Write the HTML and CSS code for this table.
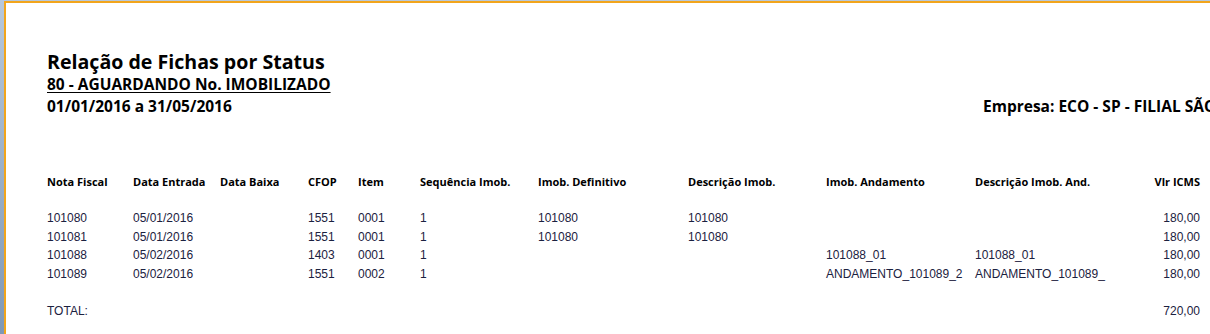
FILE: index.html
```html
<!DOCTYPE html>
<html lang="pt-BR">
<head>
<meta charset="utf-8">
<title>Relação de Fichas por Status</title>
<link rel="stylesheet" href="styles.css">
</head>
<body>
<div class="frame">
  <div class="page">
    <header class="report-head">
      <h1 class="title">Relação de Fichas por Status</h1>
      <div class="status">80 - AGUARDANDO No. IMOBILIZADO</div>
      <div class="period-line">
        <div class="period">01/01/2016 a 31/05/2016</div>
        <div class="company">Empresa: ECO - SP - FILIAL SÃO PAULO</div>
      </div>
    </header>
    <div class="grid head-row">
      <div>Nota Fiscal</div><div>Data Entrada</div><div>Data Baixa</div><div>CFOP</div><div>Item</div><div>Sequência Imob.</div><div>Imob. Definitivo</div><div>Descrição Imob.</div><div>Imob. Andamento</div><div>Descrição Imob. And.</div><div class="num">Vlr ICMS</div>
    </div>
    <div class="rows">
      <div class="grid data-row">
        <div>101080</div><div>05/01/2016</div><div></div><div>1551</div><div>0001</div><div>1</div><div>101080</div><div>101080</div><div></div><div></div><div class="num">180,00</div>
      </div>
      <div class="grid data-row">
        <div>101081</div><div>05/01/2016</div><div></div><div>1551</div><div>0001</div><div>1</div><div>101080</div><div>101080</div><div></div><div></div><div class="num">180,00</div>
      </div>
      <div class="grid data-row">
        <div>101088</div><div>05/02/2016</div><div></div><div>1403</div><div>0001</div><div>1</div><div></div><div></div><div>101088_01</div><div>101088_01</div><div class="num">180,00</div>
      </div>
      <div class="grid data-row">
        <div>101089</div><div>05/02/2016</div><div></div><div>1551</div><div>0002</div><div>1</div><div></div><div></div><div>ANDAMENTO_101089_2</div><div>ANDAMENTO_101089_</div><div class="num">180,00</div>
      </div>
    </div>
    <div class="grid total-row">
      <div class="total-label">TOTAL:</div><div class="num">720,00</div>
    </div>
  </div>
</div>
</body>
</html>
```

FILE: styles.css
```css
html, body {
  margin: 0;
  padding: 0;
  height: 100%;
  overflow: hidden;
}
body {
  background: linear-gradient(to bottom, #b7c8dc, #7f98b6);
}
.frame {
  height: 100%;
  padding: 1px 0 0 4px;
  box-sizing: border-box;
}
.page {
  height: 100%;
  background: #ffffff;
  border-top: 2px solid #f2a51c;
  border-left: 2px solid #f2a51c;
  box-sizing: border-box;
  padding: 47px 0 0 41px;
  color: #000;
}
.report-head {
  font-family: "Open Sans", "Noto Sans", sans-serif;
  font-weight: 700;
}
.title {
  margin: 0;
  font-size: 19.6px;
  line-height: 24px;
  font-weight: 700;
}
.status {
  font-size: 15.5px;
  line-height: 21px;
  text-decoration: underline;
  text-underline-offset: 2px;
}
.period-line {
  display: flex;
  font-size: 15.5px;
  line-height: 22px;
  white-space: nowrap;
}
.period {
  flex: 0 0 936px;
}
.company {
  flex: 0 0 auto;
}
.grid {
  display: grid;
  grid-template-columns: 86px 87px 88px 50px 62px 118px 150px 138px 149px 135px 90px;
  white-space: nowrap;
}
.head-row {
  margin-top: 57px;
  font-family: "Open Sans", "Noto Sans", sans-serif;
  font-weight: 700;
  font-size: 11px;
  line-height: 16px;
}
.rows {
  margin-top: 19px;
}
.data-row, .total-row {
  font-family: "Liberation Sans", Arial, sans-serif;
  font-size: 12px;
  line-height: 18.5px;
  color: #1b2140;
}
.total-row {
  margin-top: 18.5px;
}
.total-label {
  grid-column: 1 / 11;
}
.num {
  text-align: right;
}
```
